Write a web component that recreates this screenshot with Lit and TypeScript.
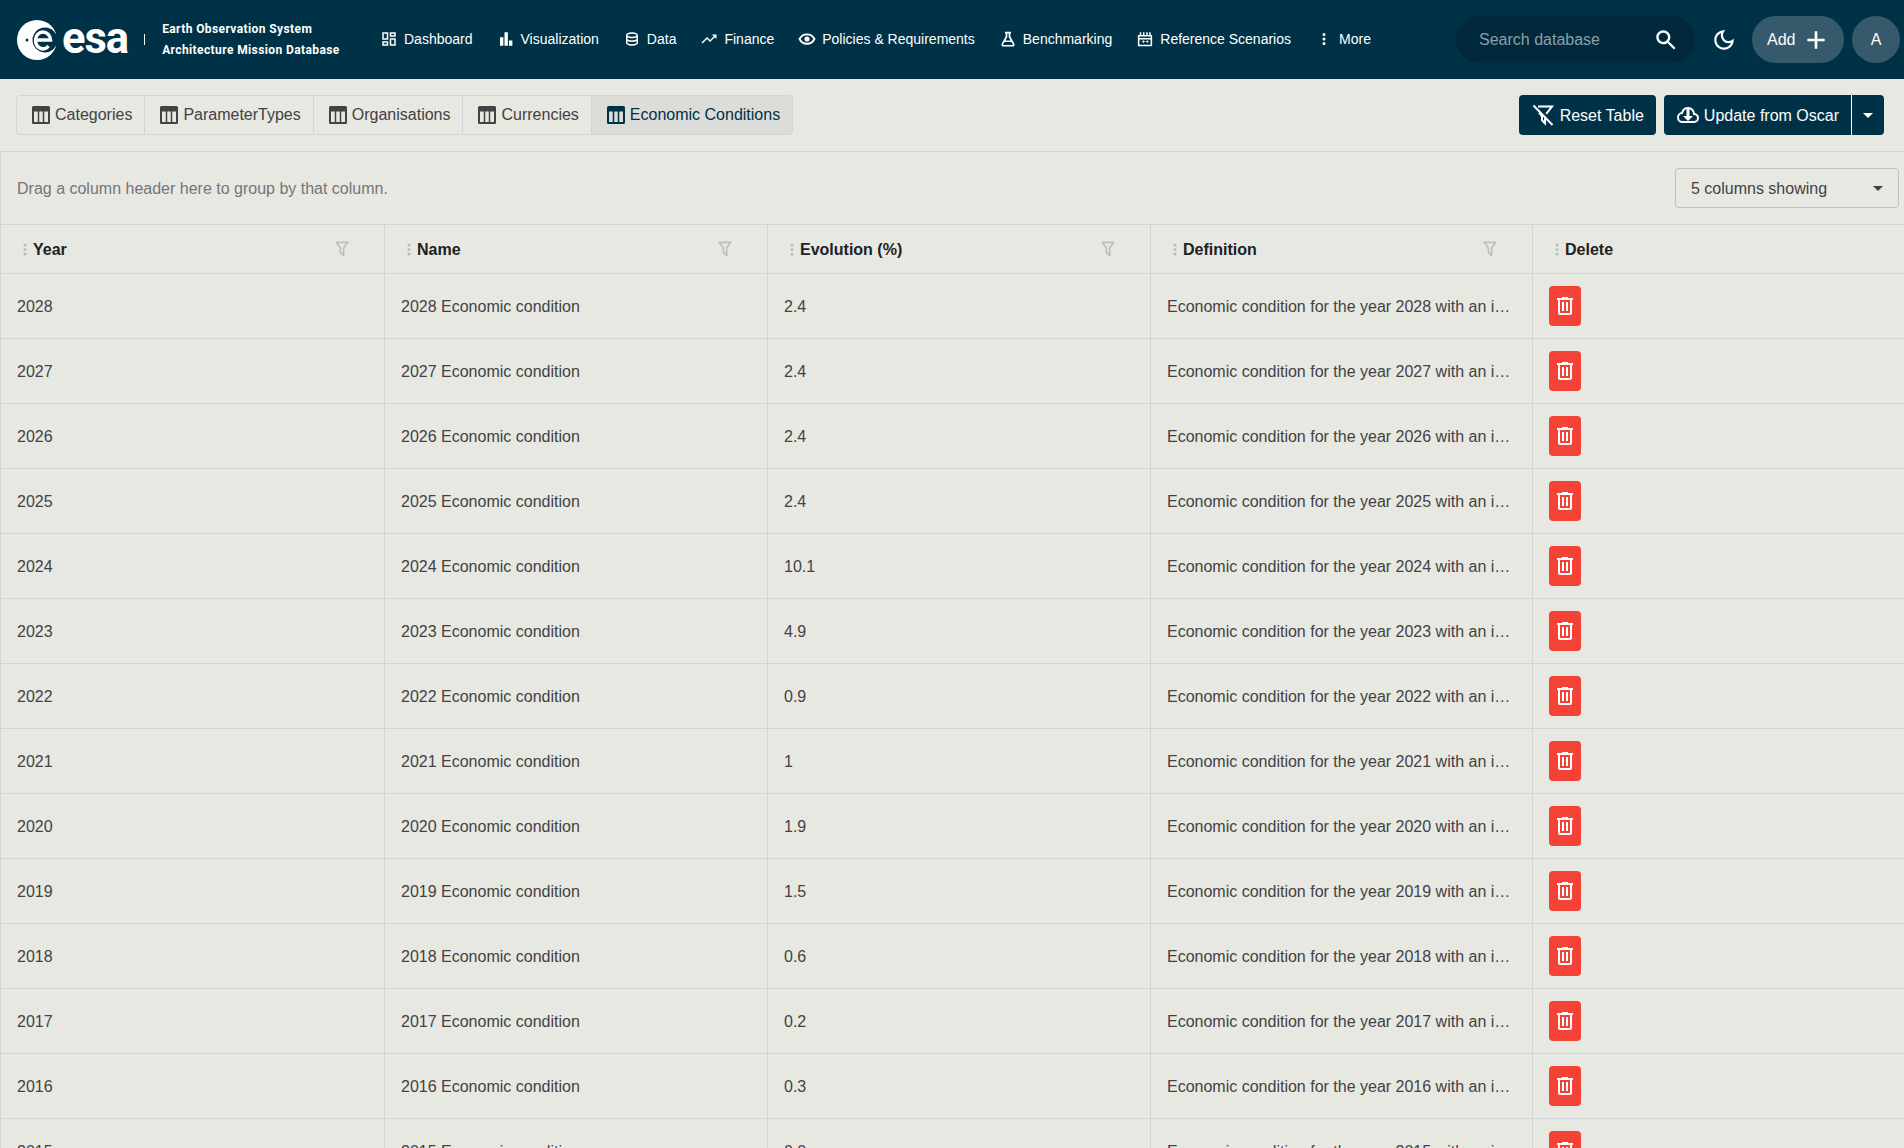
import { LitElement, css, html, svg } from 'lit';
import { customElement } from 'lit/decorators.js';

const ICONS = {
  dashboard: svg`<path d="M19,5V7H15V5H19M9,5V11H5V5H9M19,13V19H15V13H19M9,17V19H5V17H9M21,3H13V9H21V3M11,3H3V13H11V3M21,11H13V21H21V11M11,15H3V21H11V15Z"/>`,
  chart: svg`<path d="M4 9.500h4.500V21H4zM10 3h4.500V21H10zM16 14h4.500v7H16z"/>`,
  database: svg`<path d="M12 3C7.580 3 4 4.790 4 7V17C4 19.210 7.590 21 12 21S20 19.210 20 17V7C20 4.790 16.420 3 12 3M18 17C18 17.500 15.870 19 12 19S6 17.500 6 17V14.770C7.610 15.550 9.720 16 12 16S16.390 15.550 18 14.770V17M18 12.450C16.700 13.400 14.420 14 12 14C9.580 14 7.300 13.400 6 12.450V9.640C7.470 10.470 9.610 11 12 11C14.390 11 16.530 10.470 18 9.640V12.450M12 9C8.130 9 6 7.500 6 7S8.130 5 12 5C15.870 5 18 6.500 18 7S15.870 9 12 9Z"/>`,
  trending: svg`<path d="M16,6L18.290,8.290L13.410,13.170L9.410,9.170L2,16.590L3.410,18L9.410,12L13.410,16L19.710,9.710L22,12V6H16Z"/>`,
  eye: svg`<path fill="none" stroke="currentColor" stroke-width="2.400" d="M2 12C4 8 7.600 5.700 12 5.700S20 8 22 12C20 16 16.400 18.300 12 18.300S4 16 2 12Z"/><circle cx="12" cy="12" r="3.400"/>`,
  flask: svg`<path fill="none" stroke="currentColor" stroke-width="2.200" d="M8 3.500h8M10 3.500v5.500L4.600 18.600C3.900 19.900 4.800 21 6 21h12c1.200 0 2.100-1.100 1.400-2.400L14 9V3.500M7.500 15h9"/>`,
  scenario: svg`<path fill="none" stroke="currentColor" stroke-width="2" d="M3.500 7.500h17v13h-17zM6 3v4M10.300 3v4M14.600 3v4M18.500 3v4M3.500 11.500h17"/><path d="M8 15h1.500v-1.300h1V15H12v1h-1.500v1.300h-1V16H8zM13 15h1.500v-1.300h1V15H17v1h-1.500v1.300h-1V16H13z"/>`,
  dots: svg`<path d="M12,16A2,2 0 0,1 14,18A2,2 0 0,1 12,20A2,2 0 0,1 10,18A2,2 0 0,1 12,16M12,10A2,2 0 0,1 14,12A2,2 0 0,1 12,14A2,2 0 0,1 10,12A2,2 0 0,1 12,10M12,4A2,2 0 0,1 14,6A2,2 0 0,1 12,8A2,2 0 0,1 10,6A2,2 0 0,1 12,4Z"/>`,
  search: svg`<path d="M9.500,3A6.500,6.500 0 0,1 16,9.500C16,11.110 15.410,12.590 14.440,13.730L14.710,14H15.500L20.800,19.300L19.300,20.800L14,15.500V14.710L13.730,14.440C12.590,15.410 11.110,16 9.500,16A6.500,6.500 0 0,1 3,9.500A6.500,6.500 0 0,1 9.500,3M9.500,5.200C7.100,5.200 5.200,7.100 5.200,9.500C5.200,11.900 7.100,13.800 9.500,13.800C11.900,13.800 13.800,11.900 13.800,9.500C13.800,7.100 11.900,5.200 9.500,5.200Z"/>`,
  moon: svg`<path d="M9.370 5.510c-.18.640-.27 1.310-.27 1.990 0 4.080 3.320 7.400 7.400 7.400.68 0 1.350-.09 1.990-.27C17.450 17.190 14.930 19 12 19c-3.860 0-7-3.140-7-7 0-2.930 1.810-5.450 4.370-6.490zM12 3c-4.970 0-9 4.030-9 9s4.030 9 9 9 9-4.030 9-9c0-.46-.04-.92-.1-1.360-.98 1.370-2.580 2.260-4.400 2.260-2.980 0-5.400-2.420-5.400-5.400 0-1.810.89-3.420 2.260-4.400-.44-.06-.9-.1-1.360-.1z"/>`,
  plus: svg`<path d="M20,13.200H13.200V20H10.800V13.200H4V10.800H10.800V4H13.200V10.800H20Z"/>`,
  table: svg`<path d="M3 4.500A1.500 1.500 0 0 1 4.500 3h15A1.500 1.500 0 0 1 21 4.500v15a1.500 1.500 0 0 1-1.500 1.500h-15A1.500 1.500 0 0 1 3 19.500zM5 8.500V19h3.750V8.500zm5.250 0V19h3.500V8.500zm5 0V19H19V8.500z" fill-rule="evenodd"/>`,
  filterOff: svg`<path fill="none" stroke="currentColor" stroke-width="2" d="M7 3.500h14l-5.800 7.300M8 9.500l3 3.800v4l3 3v-5M2.500 2.500l19 19.500"/>`,
  cloud: svg`<path fill="none" stroke="currentColor" stroke-width="2" d="M6.500 19C4 19 2 17 2 14.500S4 10.200 6 10.100C6.800 7.100 9.200 5 12 5c3.400 0 6 2.600 6 6 2.200 0 4 1.800 4 4s-1.800 4-4 4z"/><path d="M12 18l-5-5h3.500V6h3v7H17z"/>`,
  filter: svg`<path d="M15,19.880C15.040,20.180 14.940,20.500 14.710,20.710C14.320,21.100 13.690,21.100 13.300,20.710L9.290,16.700C9.060,16.470 8.960,16.160 9,15.880V10.750L4.210,4.620C3.870,4.190 3.950,3.560 4.380,3.220C4.570,3.080 4.780,3 5,3H19C19.220,3 19.430,3.080 19.620,3.220C20.050,3.560 20.130,4.190 19.790,4.620L15,10.750V19.880M7.040,5L11,10.060V15.580L13,17.580V10.050L16.960,5H7.040Z"/>`,
  trash: svg`<path d="M9,3V4H4V6H5V19A2,2 0 0,0 7,21H17A2,2 0 0,0 19,19V6H20V4H15V3H9M7,6H17V19H7V6M9,8V17H11V8H9M13,8V17H15V8H13Z"/>`,
};

type IconName = keyof typeof ICONS;

const icon = (name: IconName, size = 24) => html`<svg class="icon" width=${size} height=${size} viewBox="0 0 24 24" fill="currentColor">${ICONS[name]}</svg>`;

const NAV: { label: string; icon: IconName }[] = [
  { label: 'Dashboard', icon: 'dashboard' },
  { label: 'Visualization', icon: 'chart' },
  { label: 'Data', icon: 'database' },
  { label: 'Finance', icon: 'trending' },
  { label: 'Policies & Requirements', icon: 'eye' },
  { label: 'Benchmarking', icon: 'flask' },
  { label: 'Reference Scenarios', icon: 'scenario' },
  { label: 'More', icon: 'dots' },
];

const TABS = ['Categories', 'ParameterTypes', 'Organisations', 'Currencies', 'Economic Conditions'];
const COLUMNS = ['Year', 'Name', 'Evolution (%)', 'Definition', 'Delete'];

const ROWS: [number, string][] = [
  [2028, '2.4'], [2027, '2.4'], [2026, '2.4'], [2025, '2.4'], [2024, '10.1'],
  [2023, '4.9'], [2022, '0.9'], [2021, '1'], [2020, '1.9'], [2019, '1.5'],
  [2018, '0.6'], [2017, '0.2'], [2016, '0.3'], [2015, '0.0'],
];

@customElement('app-root')
export class AppRoot extends LitElement {
  static styles = css`
    :host {
      display: flex;
      flex-direction: column;
      height: 100vh;
      overflow: hidden;
      background: #e8e8e3;
      color: #424242;
      font-family: "Liberation Sans", Arial, sans-serif;
      font-size: 16px;
    }
    .icon { display: block; flex: none; }

    .topbar {
      display: flex;
      align-items: center;
      flex: none;
      height: 79px;
      box-sizing: border-box;
      padding: 0 4px 0 17px;
      background: #003247;
      color: #fff;
    }
    .logo { display: flex; align-items: center; width: 351px; flex: none; }
    .logo-mark { display: block; flex: none; }
    .logo-esa {
      margin-left: 5px;
      font-family: Roboto, sans-serif;
      font-size: 43.5px;
      font-weight: 700;
      letter-spacing: -1px;
      line-height: 40px;
      position: relative;
      top: -1px;
    }
    .logo-sep { width: 1px; height: 11px; margin: 0 17px 0 16px; background: #fff; }
    .logo-title {
      font-family: Roboto, sans-serif;
      font-size: 12px;
      font-weight: 700;
      letter-spacing: 0.4px;
      line-height: 21px;
      white-space: nowrap;
    }
    .nav { display: flex; align-items: center; margin-bottom: 2px; }
    .nav-item {
      display: flex;
      align-items: center;
      gap: 6px;
      padding: 0 12px;
      font-size: 14px;
      white-space: nowrap;
    }
    .nav-item .icon { width: 18px; height: 18px; }
    .actions { display: flex; align-items: center; margin-left: auto; }
    .search {
      display: flex;
      align-items: center;
      justify-content: space-between;
      box-sizing: border-box;
      width: 239px;
      height: 47px;
      padding: 0 16px 0 23px;
      border-radius: 24px;
      background: #002a3c;
      color: #8e9ea6;
    }
    .search .icon { color: #fff; }
    .theme { display: flex; justify-content: center; width: 57px; }
    .add {
      display: flex;
      align-items: center;
      justify-content: space-between;
      box-sizing: border-box;
      width: 92px;
      height: 47px;
      padding: 0 15px;
      border-radius: 24px;
      background: #365a6b;
    }
    .avatar {
      display: flex;
      align-items: center;
      justify-content: center;
      width: 48px;
      height: 47px;
      margin-left: 8px;
      border-radius: 50%;
      background: #365a6b;
    }

    .toolbar {
      display: flex;
      justify-content: space-between;
      flex: none;
      height: 72px;
      box-sizing: border-box;
      padding: 16px 20px 0 16px;
    }
    .tabs {
      display: flex;
      height: 40px;
      box-sizing: border-box;
      border: 1px solid #ced4da;
      border-radius: 4px;
    }
    .tab {
      display: flex;
      align-items: center;
      gap: 2px;
      padding: 0 12px;
      border-right: 1px solid #ced4da;
      white-space: nowrap;
    }
    .tab:last-child { border-right: none; }
    .tab.active { background: #dcdcd8; color: #003247; }
    .tool-group { display: flex; gap: 8px; }
    .btn {
      display: flex;
      align-items: center;
      height: 40px;
      box-sizing: border-box;
      border-radius: 4px;
      background: #003247;
      color: #fff;
      white-space: nowrap;
    }
    .btn-main { display: flex; align-items: center; gap: 5px; padding: 0 12px; }
    .btn-main.tight { gap: 4px; }
    .btn-main span { padding-top: 1px; }
    .btn-split {
      display: flex;
      align-items: center;
      justify-content: center;
      align-self: stretch;
      box-sizing: border-box;
      width: 33px;
      border-left: 1px solid #fff;
    }
    .caret { width: 0; height: 0; border: 5px solid transparent; border-top-color: currentColor; border-bottom: 0; }

    .grid { flex: 1; min-height: 0; border-left: 1px solid #ced4da; border-top: 1px solid #ced4da; }
    .group-bar {
      display: flex;
      align-items: center;
      justify-content: space-between;
      height: 73px;
      box-sizing: border-box;
      padding: 0 5px 0 16px;
      border-bottom: 1px solid #ced4da;
      color: #757575;
    }
    .group-bar span { padding-top: 1px; }
    .select {
      display: flex;
      align-items: center;
      justify-content: space-between;
      box-sizing: border-box;
      width: 224px;
      height: 40px;
      padding: 0 15px;
      border: 1px solid #bdbdbd;
      border-radius: 4px;
      color: #424242;
    }
    .select .caret { padding-top: 0; }
    .row {
      display: grid;
      grid-template-columns: 384px 383px 383px 382px 1fr;
      box-sizing: border-box;
      height: 65px;
      border-bottom: 1px solid #ced4da;
    }
    .row.head { height: 49px; color: #212121; font-weight: 700; }
    .cell {
      display: flex;
      align-items: center;
      min-width: 0;
      box-sizing: border-box;
      padding: 0 16px;
      border-right: 1px solid #ced4da;
    }
    .cell:last-child { border-right: none; }
    .cell > span { padding-top: 1px; }
    .head .cell { padding: 0 32px 0 22px; }
    .grip { display: block; margin-right: 6px; flex: none; color: #bdbdbd; }
    .head .cell > .filter { margin-left: auto; padding-top: 0; color: #bdbdbd; }
    .clip { overflow: hidden; text-overflow: ellipsis; white-space: nowrap; }
    .delete {
      display: flex;
      align-items: center;
      justify-content: center;
      width: 32px;
      height: 40px;
      border-radius: 4px;
      background: #f44336;
      color: #fff;
    }
  `;

  renderLogo() {
    return html`
      <div class="logo">
        <svg class="logo-mark" width="40" height="40" viewBox="0 0 40 40">
          <circle cx="20" cy="20" r="20" fill="#fff"/>
          <circle cx="28" cy="20" r="12.500" fill="#003247"/>
          <rect x="34" y="14" width="6" height="12" fill="#003247"/>
          <circle cx="10" cy="20" r="1.500" fill="#003247"/>
          <path fill="none" stroke="#fff" stroke-width="3.500" d="M18.500 20H33.500a7.500 8 0 0 0-15 0 7.500 8.500 0 0 0 13 6"/>
        </svg>
        <span class="logo-esa">esa</span>
        <span class="logo-sep"></span>
        <div class="logo-title">Earth Observation System<br />Architecture Mission Database</div>
      </div>
    `;
  }

  renderHeadCell(label: string) {
    return html`
      <div class="cell">
        <svg class="grip" width="4" height="13" viewBox="0 0 4 13" fill="currentColor">
          <circle cx="2" cy="2" r="1.600"/><circle cx="2" cy="6.500" r="1.600"/><circle cx="2" cy="11" r="1.600"/>
        </svg>
        <span>${label}</span>
        ${label === 'Delete' ? '' : html`<span class="filter">${icon('filter', 20)}</span>`}
      </div>
    `;
  }

  render() {
    return html`
      <header class="topbar">
        ${this.renderLogo()}
        <nav class="nav">
          ${NAV.map((item) => html`<div class="nav-item">${icon(item.icon)}<span>${item.label}</span></div>`)}
        </nav>
        <div class="actions">
          <div class="search"><span>Search database</span>${icon('search', 26)}</div>
          <div class="theme">${icon('moon', 26)}</div>
          <div class="add"><span>Add</span>${icon('plus', 26)}</div>
          <div class="avatar">A</div>
        </div>
      </header>

      <div class="toolbar">
        <div class="tabs">
          ${TABS.map((tab) => html`<div class="tab ${tab === 'Economic Conditions' ? 'active' : ''}">${icon('table')}${tab}</div>`)}
        </div>
        <div class="tool-group">
          <div class="btn"><div class="btn-main">${icon('filterOff')}<span>Reset Table</span></div></div>
          <div class="btn">
            <div class="btn-main tight">${icon('cloud')}<span>Update from Oscar</span></div>
            <div class="btn-split"><span class="caret"></span></div>
          </div>
        </div>
      </div>

      <section class="grid">
        <div class="group-bar">
          <span>Drag a column header here to group by that column.</span>
          <div class="select"><span>5 columns showing</span><span class="caret"></span></div>
        </div>
        <div class="row head">${COLUMNS.map((col) => this.renderHeadCell(col))}</div>
        ${ROWS.map(([year, value]) => html`
          <div class="row">
            <div class="cell"><span>${year}</span></div>
            <div class="cell"><span>${year} Economic condition</span></div>
            <div class="cell"><span>${value}</span></div>
            <div class="cell"><span class="clip">Economic condition for the year ${year} with an inflation of ${value}%</span></div>
            <div class="cell"><div class="delete">${icon('trash')}</div></div>
          </div>
        `)}
      </section>
    `;
  }
}
